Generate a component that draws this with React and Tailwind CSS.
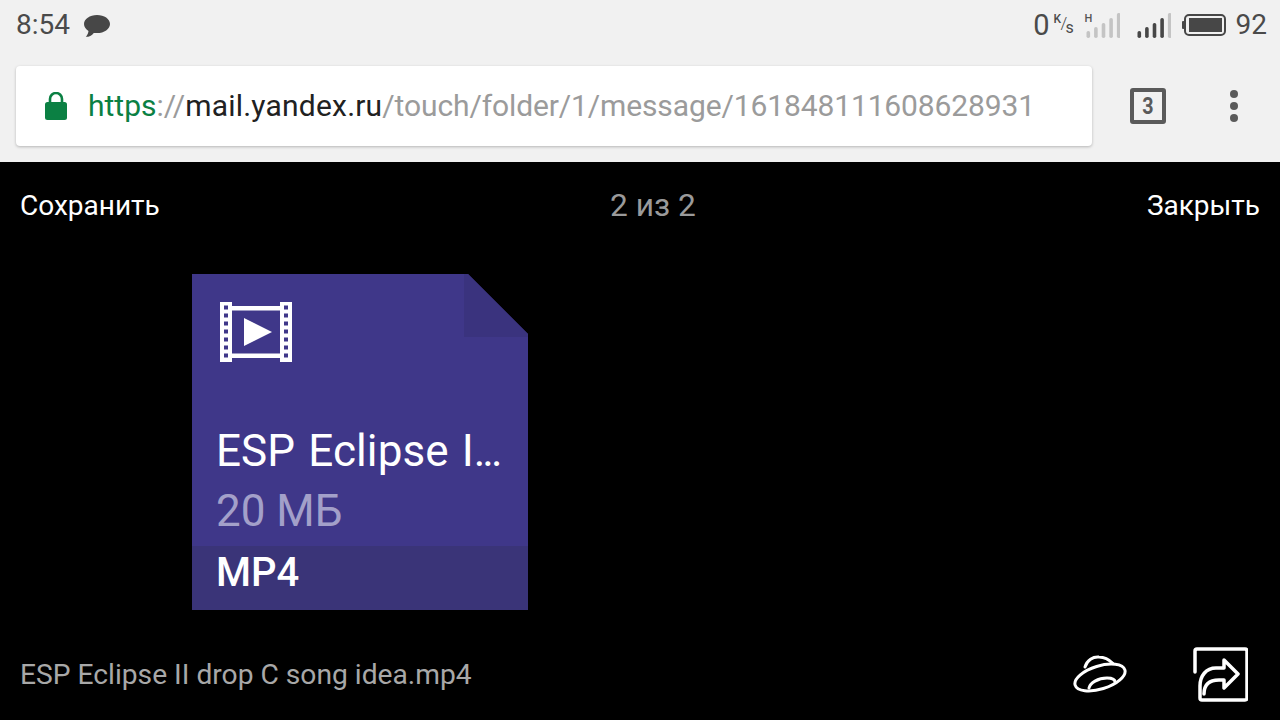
import React from "react";

function Bars({ color, dim, levels }) {
  return (
    <svg width="34" height="26" viewBox="0 0 34 26" className="block">
      {levels.map((h, i) => (
        <rect key={i} x={i * 7.6 + 0.5} y={26 - h} width="3.6" height={h} rx="1.7" fill={i < dim ? color : "#c4c4c4"} />
      ))}
    </svg>
  );
}

function FilmIcon() {
  const holes = [0, 1, 2, 3, 4, 5, 6];
  return (
    <svg width="72" height="60" viewBox="0 0 72 60" className="block">
      <rect x="0" y="0" width="12" height="60" fill="#fff" />
      <rect x="60" y="0" width="12" height="60" fill="#fff" />
      <rect x="12" y="4" width="48" height="4.5" fill="#fff" />
      <rect x="12" y="51.5" width="48" height="4.5" fill="#fff" />
      {holes.map((i) => (
        <React.Fragment key={i}>
          <rect x="4" y={3.5 + i * 8} width="4" height="4" fill="#3f3789" />
          <rect x="64" y={3.5 + i * 8} width="4" height="4" fill="#3f3789" />
        </React.Fragment>
      ))}
      <path d="M24 16 L52 30 L24 44 Z" fill="#fff" />
    </svg>
  );
}

export default function App() {
  return (
    <div className="w-[1280px] h-[720px] overflow-hidden bg-black flex flex-col font-['Roboto',sans-serif]">
      <div className="h-[162px] bg-[#f1f1f1] flex flex-col">
        <div className="h-[50px] flex items-center justify-between pl-[16px] pr-[13px] text-[#4a4a4a] text-[28px]">
          <div className="flex items-center gap-[13px]">
            <span className="leading-none">8:54</span>
            <svg width="28" height="24" viewBox="0 0 28 24" className="mt-[2px]">
              <path d="M14 1C6.8 1 1 5 1 10c0 2.8 1.7 5.2 4.5 6.9C5.3 19 4.4 21 2.8 22.8c3 .1 6-1.3 8-3.9 1 .2 2.1.2 3.2.2 7.2 0 13-4 13-9.1S21.2 1 14 1z" fill="#474747" />
            </svg>
          </div>
          <div className="flex items-center">
            <span className="leading-none text-[29px]">0</span>
            <span className="relative w-[20px] h-[26px] ml-[4px] text-[#4a4a4a] leading-none">
              <span className="absolute left-0 top-[1px] text-[12px] font-medium">K</span>
              <span className="absolute left-[7px] top-[3px] text-[17px] font-light">/</span>
              <span className="absolute left-[12px] top-[8px] text-[16px]">s</span>
            </span>
            <span className="relative ml-[11px] w-[36px] h-[26px] block">
              <span className="absolute left-0 top-[1px] text-[11px] font-medium leading-none text-[#555]">H</span>
              <span className="absolute left-[1px] top-0 block">
                <Bars color="#c4c4c4" dim={5} levels={[7, 11, 15, 20, 25]} />
              </span>
            </span>
            <span className="ml-[16px] block">
              <Bars color="#474747" dim={4} levels={[7, 11, 15, 20, 25]} />
            </span>
            <svg width="44" height="22" viewBox="0 0 44 22" className="ml-[11px] block">
              <rect x="0" y="7" width="2.5" height="8" rx="1" fill="#474747" />
              <rect x="3" y="1" width="40" height="20" rx="4" fill="none" stroke="#474747" strokeWidth="2" />
              <rect x="7" y="4" width="33" height="14" fill="#474747" />
            </svg>
            <span className="ml-[10px] leading-none">92</span>
          </div>
        </div>
        <div className="flex items-center pt-[16px]">
          <div className="ml-[16px] w-[1076px] h-[80px] bg-white rounded-[4px] shadow-[0_1px_3px_rgba(0,0,0,0.25)] flex items-center pl-[29px]">
            <svg width="22" height="28" viewBox="0 0 22 28" className="block shrink-0">
              <path d="M5 11V7a6 6 0 0 1 12 0v4" fill="none" stroke="#0b8043" strokeWidth="2.6" />
              <rect x="0" y="10" width="22" height="18" rx="2.5" fill="#0b8043" />
            </svg>
            <div className="ml-[21px] text-[30px] leading-none whitespace-nowrap">
              <span className="text-[#0b8043]">https</span>
              <span className="text-[#9b9b9b]">://</span>
              <span className="text-[#212121] tracking-[0.2px]">mail.yandex.ru</span>
              <span className="text-[#9b9b9b] tracking-[-0.12px]">/touch/folder/1/message/161848111608628931</span>
            </div>
          </div>
          <div className="ml-[38px] w-[36px] h-[36px] border-[4px] border-[#5a5a5a] rounded-[3px] flex items-center justify-center text-[24px] font-bold text-[#5a5a5a] leading-none">
            <span className="block scale-x-[0.82]">3</span>
          </div>
          <div className="ml-[64px] flex flex-col gap-[4px]">
            <div className="w-[8px] h-[8px] rounded-full bg-[#5a5a5a]" />
            <div className="w-[8px] h-[8px] rounded-full bg-[#5a5a5a]" />
            <div className="w-[8px] h-[8px] rounded-full bg-[#5a5a5a]" />
          </div>
        </div>
      </div>

      <div className="flex-1 flex flex-col">
        <div className="h-[84px] relative flex items-center justify-between px-[20px] pt-[3px] text-[28px] text-white">
          <span>Сохранить</span>
          <span className="absolute left-[610px] text-[31.7px] text-[#9a9a9a]">2 из 2</span>
          <span>Закрыть</span>
        </div>
        <div className="pl-[192px] pt-[28px]">
          <div className="relative w-[336px] h-[336px] bg-[#3f3789] [clip-path:polygon(0_0,276px_0,336px_60px,336px_336px,0_336px)] flex flex-col">
            <div className="absolute left-[272px] top-0 w-[64px] h-[63px] bg-[#3a337e]" />
            <div className="pl-[28px] pt-[28px]">
              <FilmIcon />
            </div>
            <div className="pl-[24px] mt-[59px] text-[44px] leading-[60px]">
              <div className="text-white whitespace-nowrap">
                <span className="tracking-[0.1px] [word-spacing:2px]">ESP Eclipse I</span>
                <span className="tracking-[-3px]">...</span>
              </div>
              <div className="text-[#a3a0c9]">20 МБ</div>
            </div>
            <div className="mt-auto h-[64px] bg-[#3a3478] pl-[24px] pb-[10px] flex items-center text-[40px] font-medium text-white leading-none">
              MP4
            </div>
          </div>
        </div>
        <div className="flex-1 flex items-center justify-between pl-[20px] pr-[32px] pt-[19px]">
          <span className="text-[28.2px] text-[#a8a8a8] pt-[2px]">ESP Eclipse II drop C song idea.mp4</span>
          <div className="flex items-center gap-[64px] mb-[2px]">
            <svg width="56" height="38" viewBox="0 0 56 38" fill="none" stroke="#fff" strokeWidth="3" strokeLinecap="round" className="block">
              <ellipse cx="28" cy="22.5" rx="26" ry="11.5" transform="rotate(-17 28 22.5)" />
              <path d="M13 12 C15 5 21 1.5 27 2 C32 2 37 4.5 41 8.5" />
              <path d="M17 33 C18 28 26 23 35 23 C41 23 43 25 43 27" />
            </svg>
            <svg width="56" height="56" viewBox="0 0 56 56" fill="none" stroke="#fff" strokeWidth="3.5" strokeLinecap="round" strokeLinejoin="round" className="block">
              <path d="M3 26 V5 Q3 3 5 3 H53 Q55 3 55 5 V52 Q55 54 53 54 H10 Q8 54 8 52 V40 C8 30 14 22 24 22 H32 V14 L46 28 L32 42 V34 H27 C18 34 12 38 12 48" />
            </svg>
          </div>
        </div>
      </div>
    </div>
  );
}
